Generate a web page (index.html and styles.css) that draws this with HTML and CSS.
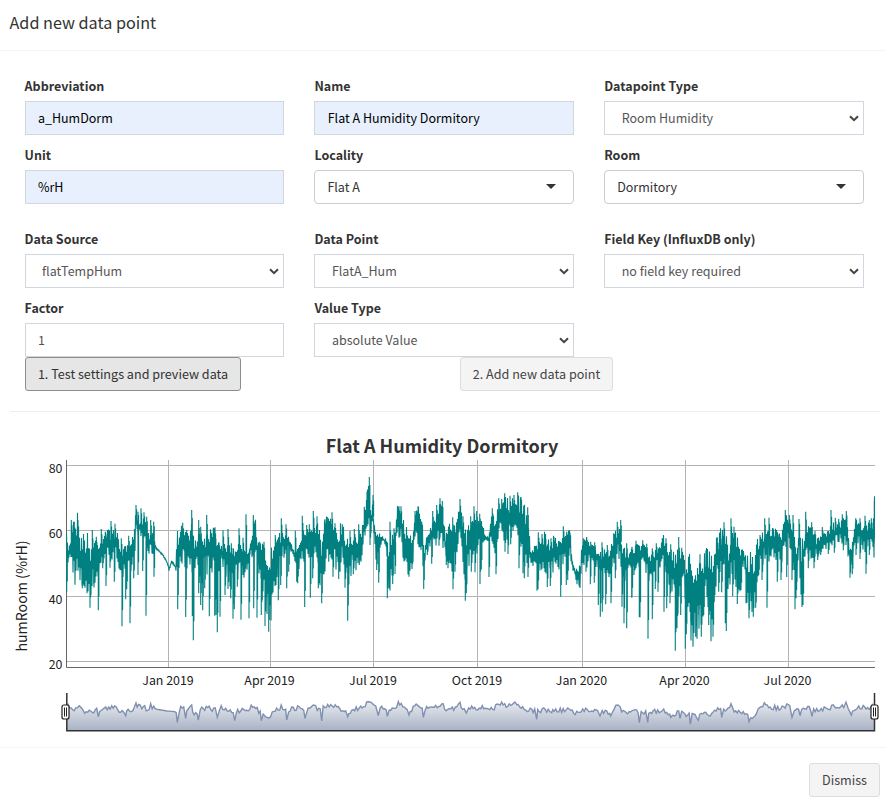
FILE: index.html
```html
<!DOCTYPE html>
<html lang="en">
<head>
<meta charset="utf-8">
<title>Add new data point</title>
<link rel="stylesheet" href="styles.css">
</head>
<body>
<div class="modal">
  <header class="modal-header"><h4>Add new data point</h4></header>
  <main class="modal-body">
    <form class="fields">
      <label class="field"><span>Abbreviation</span><input class="control filled" value="a_HumDorm"></label>
      <label class="field"><span>Name</span><input class="control filled" value="Flat A Humidity Dormitory"></label>
      <label class="field"><span>Datapoint Type</span><div class="control select">Room Humidity<svg class="chevron" viewBox="0 0 10 7"><path d="M1 1.2 5 5.2 9 1.2"/></svg></div></label>
      <label class="field"><span>Unit</span><input class="control filled" value="%rH"></label>
      <label class="field"><span>Locality</span><div class="control picker">Flat A<i class="caret"></i></div></label>
      <label class="field"><span>Room</span><div class="control picker">Dormitory<i class="caret"></i></div></label>
    </form>
    <form class="fields source">
      <label class="field"><span>Data Source</span><div class="control select">flatTempHum<svg class="chevron" viewBox="0 0 10 7"><path d="M1 1.2 5 5.2 9 1.2"/></svg></div></label>
      <label class="field"><span>Data Point</span><div class="control select">FlatA_Hum<svg class="chevron" viewBox="0 0 10 7"><path d="M1 1.2 5 5.2 9 1.2"/></svg></div></label>
      <label class="field"><span>Field Key (InfluxDB only)</span><div class="control select">no field key required<svg class="chevron" viewBox="0 0 10 7"><path d="M1 1.2 5 5.2 9 1.2"/></svg></div></label>
      <label class="field"><span>Factor</span><input class="control" value="1"></label>
      <label class="field"><span>Value Type</span><div class="control select">absolute Value<svg class="chevron" viewBox="0 0 10 7"><path d="M1 1.2 5 5.2 9 1.2"/></svg></div></label>
    </form>
    <div class="actions">
      <div><button class="btn active test">1. Test settings and preview data</button></div>
      <div><button class="btn add">2. Add new data point</button></div>
    </div>
    <hr>
    <svg class="chart" width="886" height="315" viewBox="0 425 886 315">
      <defs>
        <linearGradient id="fade" x1="0" y1="700" x2="0" y2="731" gradientUnits="userSpaceOnUse">
          <stop offset="0" stop-color="#eceef2"/><stop offset="1" stop-color="#a7b1c4"/>
        </linearGradient>
        <clipPath id="plot"><rect x="66" y="460" width="809" height="207"/></clipPath>
      </defs>
      <text class="title" x="442" y="453" text-anchor="middle">Flat A Humidity Dormitory</text>
      <path class="grid" d="M67 465.5H875M67 530.5H875M67 596.5H875M67 661.5H875M168.5 460V667M270.5 460V667M373.5 460V667M477.5 460V667M582.5 460V667M685.5 460V667M788.5 460V667"/>
      <path class="axis" d="M66.5 460V667.5H875"/>
      <g clip-path="url(#plot)"><path id="series"/></g>
      <g class="tick" text-anchor="end">
        <text x="62.5" y="473">80</text><text x="62.5" y="538">60</text><text x="62.5" y="604">40</text><text x="62.5" y="669">20</text>
      </g>
      <g class="tick" text-anchor="middle">
        <text x="168" y="685">Jan 2019</text><text x="269.5" y="685">Apr 2019</text><text x="373" y="685">Jul 2019</text><text x="477" y="685">Oct 2019</text><text x="581.5" y="685">Jan 2020</text><text x="684.5" y="685">Apr 2020</text><text x="787.5" y="685">Jul 2020</text>
      </g>
      <text class="ytitle" transform="translate(27 596) rotate(-90)" text-anchor="middle">humRoom (%rH)</text>
      <path id="range-fill"/><path id="range-line"/>
      <path class="range-axis" d="M66.8 693V730.8H874.5V693"/>
      <g class="handle"><rect x="62" y="705" width="7" height="14" rx="2"/><path d="M64.5 707.5V716.5M66.5 707.5V716.5"/></g>
      <g class="handle"><rect x="871" y="705" width="7" height="14" rx="2"/><path d="M873.5 707.5V716.5M875.5 707.5V716.5"/></g>
    </svg>
  </main>
  <footer class="modal-footer"><button class="btn dismiss">Dismiss</button></footer>
</div>
<script src="chart.js"></script>
</body>
</html>
```
FILE: chart.js
```js
// Each block covers one stretch of the time axis, in thirds of a pixel.
// band: x, top, bottom of the daily range; spikes: x, extreme value.
const blocks = [
  { x0: 0,
    band: '200 258 320,205 285 308,211 270 300,214 215 300,222 215 325,236 210 335,240 262 370,250 265 360,262 270 375,272 300 378,285 270 355,300 265 325,315 240 285,330 240 290,350 240 290,358 280 320,366 290 350,378 290 330,395 280 330,402 240 300,408 180 220,420 200 235,435 200 240,445 245 285,460 230 275,467 275 280,480 288 292,490 300 304,500 318 322,508 335 345,515 318 322,522 325 330,528 340 345,531 250 340,545 235 300,560 250 310,575 230 290,580 270 390,590 260 310,600 240 350,615 260 330,630 240 310,645 250 325,655 270 330,660 275 320',
    spikes: '200 410,247 400,261 415,270 458,281 388,295 466,308 340,318 393,330 338,343 380,366 514,377 433,380 403,390 505,401 370,414 360,428 348,438 482,462 365,533 463,557 486,580 556,577 483,596 415,602 450,608 466,604 415,614 400,628 484,644 482,652 532,214 195,223 200,234 195,277 225,289 245,304 222,316 230,333 198,345 206,364 250,386 242,408 150,414 170,423 160,432 172,440 185,452 195,461 200,548 203,575 165,560 225,596 195,602 215,620 180,632 228,640 218,646 238' },
  { x0: 210,
    band: '30 275 300,45 285 330,60 290 360,75 290 340,90 280 320,100 280 340,115 290 320,125 245 290,137 210 260,143 270 310,155 290 360,165 300 380,172 330 460,185 320 440,192 280 360,205 270 340,215 240 290,230 240 275,240 260 278,250 285 300,258 290 340,268 260 315,280 240 290,300 235 295,315 215 270,327 240 340,335 290 360,345 210 300,355 210 270,370 215 290,385 240 320,397 220 290,410 270 370,425 260 320,440 250 310,455 250 300,462 190 240,472 130 190,477 90 190,482 180 240,488 150 200,493 210 245,498 260 300,507 240 270,520 250 255,530 255 270,534 290 390,545 260 330,555 230 290,562 170 230,572 180 235,582 220 290,595 250 320,605 270 325,613 190 250,625 170 230,635 210 260,642 320 370,648 262 278,658 230 265',
    spikes: '5 235,12 220,15 217,27 262,39 226,54 222,64 265,87 220,99 248,108 178,130 180,134 205,149 260,162 260,196 240,214 190,228 208,256 227,277 182,290 210,298 208,310 168,321 184,345 193,352 186,366 172,375 205,397 208,420 228,433 222,446 208,463 155,471 110,478 66,489 120,540 200,552 220,567 154,573 154,615 168,624 154,632 198,18 480,22 532,30 485,45 420,54 402,62 430,69 491,73 463,82 395,93 494,105 352,117 490,131 460,141 488,154 480,157 435,165 513,176 530,205 436,212 390,230 400,236 350,260 380,263 385,284 456,301 428,308 370,325 400,335 445,345 328,356 320,369 365,386 372,405 398,413 497,415 415,430 358,448 330,480 270,500 345,506 383,532 430,538 400,548 387,555 357,580 310,597 365,606 340,641 400,652 300' },
  { x0: 420,
    band: '0 210 270,7 220 290,11 270 330,18 250 275,26 240 280,36 220 270,46 190 250,56 170 230,66 175 230,72 200 260,78 260 320,88 230 300,98 240 310,108 230 290,115 180 230,125 190 250,132 240 330,140 270 350,148 220 290,160 210 270,175 215 270,185 210 250,195 240 255,205 250 256,215 190 250,228 230 290,234 165 220,244 155 210,254 150 220,266 160 230,280 150 210,293 140 200,302 160 240,312 180 270,322 200 290,332 290 310,345 280 320,360 270 320,375 250 320,390 280 320,400 260 320,415 275 320,428 240 310,440 240 290,450 240 290,456 310 330,465 350 358,475 350 390,482 345 390,486 270 310,500 260 310,515 280 310,530 290 320,540 300 350,555 300 350,565 310 350,575 280 320,585 250 300,600 210 280,606 270 340,615 300 370,625 300 330,640 290 325,655 270 325',
    spikes: '5 200,38 168,50 150,60 130,67 138,98 187,120 132,129 184,152 184,162 154,170 168,179 176,217 160,236 130,245 132,254 115,270 122,282 120,293 112,303 126,311 152,323 157,355 232,366 237,376 240,393 250,402 246,417 258,430 214,440 230,450 233,490 250,500 246,512 260,524 262,546 262,562 270,581 235,592 200,602 195,620 265,636 275,648 257,655 270,11 402,35 326,57 272,79 330,84 340,99 403,105 350,136 437,139 415,154 350,165 352,180 387,184 343,207 366,228 358,255 290,264 297,272 268,297 340,309 355,313 370,324 366,351 407,354 403,372 340,382 396,391 393,422 425,439 390,443 375,478 395,498 350,511 388,523 383,535 450,541 485,547 470,557 448,573 445,586 370,606 455,612 505,620 520,636 427,648 340,658 487' },
  { x0: 630,
    band: '30 290 320,45 270 315,55 310 355,70 300 340,85 285 320,100 260 320,112 290 350,122 290 370,135 330 400,145 320 430,155 300 350,163 300 350,168 350 470,180 345 495,192 350 500,205 345 480,217 340 460,230 300 380,240 350 500,250 350 450,256 290 370,270 250 330,283 240 310,295 300 380,305 240 310,318 270 360,330 290 380,335 290 320,347 300 330,350 340 440,362 330 450,377 320 440,383 270 330,395 250 310,405 240 290,420 240 290,435 235 285,447 240 290,455 270 310,461 200 250,475 195 250,485 230 270,493 270 350,500 310 370,507 220 280,514 300 400,522 250 330,530 220 270,545 230 285,560 260 290,575 250 280,590 240 265,603 220 270,620 215 250,635 210 250,650 200 245,655 250 290,660 290 330,668 270 300,675 200 250,690 215 260,705 220 270,715 215 260,728 220 260,733 150 265',
    spikes: '18 258,38 256,50 266,67 280,79 265,97 250,108 250,122 268,146 246,155 278,180 345,210 298,228 286,262 247,271 240,282 202,303 190,312 215,365 328,390 240,404 190,417 188,429 220,447 238,466 165,478 180,489 180,507 192,527 170,545 202,555 228,577 216,603 165,616 188,626 192,637 178,649 168,677 190,690 190,705 182,718 195,724 190,733 138,5 428,12 360,30 487,54 551,67 493,76 402,84 410,102 470,110 460,120 445,136 587,141 520,152 480,166 581,169 538,182 500,197 545,206 480,214 545,221 480,236 510,249 545,253 440,266 410,275 412,286 505,289 528,308 424,322 447,333 405,348 445,357 490,370 485,377 458,386 360,396 375,411 458,442 380,453 375,470 366,486 375,495 463,498 430,516 456,519 450,535 340,552 340,563 315,572 300,595 297,613 293,640 286,660 368,667 358,678 300,690 312,708 356,718 300,733 265' }
];
const parse = s => s.split(',').map(t => t.split(' ').map(Number));
let seed = 7;
const rand = () => (seed = (seed * 16807) % 2147483647) / 2147483647;

const band = [], spikes = [];
for (const b of blocks) {
  for (const [x, t, l] of parse(b.band)) band.push([b.x0 + x / 3, 455 + t / 3, 455 + l / 3]);
  for (const [x, y] of parse(b.spikes)) spikes.push([b.x0 + x / 3, 455 + y / 3]);
}
band.sort((a, b) => a[0] - b[0]);
const pts = [];
let i = 0, up = false;
for (let x = 66.5; x < 875; x += 0.5) {
  while (i < band.length - 2 && band[i + 1][0] < x) i++;
  const a = band[i], b = band[i + 1];
  const k = Math.max(0, Math.min(1, (x - a[0]) / (b[0] - a[0] || 1)));
  const t = a[1] + (b[1] - a[1]) * k, l = a[2] + (b[2] - a[2]) * k, h = l - t;
  up = !up;
  pts.push([x, up ? t + h * (rand() * 0.7 - 0.4) : l - h * (rand() * 0.95 - 0.6), (t + l) / 2]);
}
let d = 'M' + pts.map(p => p[0].toFixed(1) + ' ' + p[1].toFixed(1)).join('L');
for (const [x, y] of spikes) {
  const n = pts.reduce((m, p) => Math.abs(p[0] - x) < Math.abs(m[0] - x) ? p : m);
  const near = n[2] + (y - n[2]) * 0.75;
  d += `M${x.toFixed(1)} ${n[2].toFixed(1)}V${y.toFixed(1)}M${(x + 0.6).toFixed(1)} ${n[2].toFixed(1)}V${near.toFixed(1)}`;
}
document.getElementById('series').setAttribute('d', d);

// Overview line of the range selector.
const overview = [
  { x0: 0, p: '200 752,214 757,225 765,238 750,250 772,262 765,280 767,295 765,310 763,330 757,350 760,355 768,375 765,395 765,402 757,408 748,420 757,430 752,440 762,452 755,467 762,500 768,528 770,534 780,540 758,548 752,560 765,575 755,580 778,600 765,620 757,640 765,655 765', s: '238 752,295 785,377 782,408 744,452 746,532 802,557 790,575 750,595 795,652 787' },
  { x0: 210, p: '30 757,40 764,55 768,75 772,90 765,110 762,130 755,145 768,155 778,170 780,185 780,192 765,215 757,230 765,250 762,270 757,290 768,310 752,325 762,345 757,365 750,380 758,400 765,415 772,430 765,450 757,475 745,490 750,500 765,530 758,545 765,562 748,580 755,600 770,620 752,640 765,655 755', s: '74 797,154 797,176 790,230 795,285 790,310 750,335 798,413 785,477 740,505 782,532 784,565 740,597 780,640 787' },
  { x0: 420, p: '20 762,40 757,65 748,80 765,100 760,120 750,140 768,155 753,175 760,205 758,222 763,235 745,255 750,285 743,305 757,325 765,350 768,375 765,400 767,425 766,450 763,460 775,475 777,495 762,520 765,540 770,560 773,575 770,595 750,605 768,625 772,645 767', s: '120 742,139 774,285 741,350 793,395 773,540 783,572 783,594 750,658 803' },
  { x0: 630, p: '40 773,45 767,70 770,90 767,110 770,130 780,150 770,170 780,185 780,205 787,220 778,250 775,265 763,280 770,305 757,320 772,345 772,357 790,375 778,385 765,405 755,430 757,450 762,470 753,490 765,510 768,530 757,550 765,575 765,600 757,630 757,650 750,662 775,675 758,690 757,710 757,733 755', s: '53 802,122 787,150 790,181 808,205 796,275 787,303 746,357 800,403 743,486 787,510 782,546 784,648 742,664 780' }
];
const line = [];
const trend = [], dips = [];
for (const o of overview) {
  for (const q of parse(o.p)) trend.push([o.x0 * 3 + q[0], q[1]]);
  for (const q of parse(o.s)) dips.push([o.x0 * 3 + q[0], q[1]]);
}
let j = 0;
for (let x = 200; x <= 2623; x += 4.5) {
  while (j < trend.length - 2 && trend[j + 1][0] < x) j++;
  const a = trend[j], b = trend[j + 1];
  const y = a[1] + (b[1] - a[1]) * Math.min(1, (x - a[0]) / (b[0] - a[0]));
  const calm = x > 466 && x < 528;
  if (!dips.some(q => Math.abs(q[0] - x) < 3)) line.push([x / 3, 455 + (y + (calm ? 0 : (rand() - 0.5) * 15)) / 3]);
}
for (const q of dips) line.push([q[0] / 3, 455 + q[1] / 3]);
line.sort((a, b) => a[0] - b[0]);
const path = 'M' + line.map(p => p[0].toFixed(1) + ' ' + p[1].toFixed(1)).join('L');
document.getElementById('range-line').setAttribute('d', path);
document.getElementById('range-fill').setAttribute('d', path + 'L874.5 731L66.5 731Z');
```
FILE: styles.css
```css
* { box-sizing: border-box; }
body {
  margin: 0;
  background: #fff;
  color: #333;
  font: 12.5px/20px "Noto Sans CJK SC", sans-serif;
}
.modal { display: flex; flex-direction: column; width: 886px; height: 800px; overflow: hidden; }
.modal-header { height: 51px; padding: 9px 9.5px 0; border-bottom: 1px solid #f4f4f4; }
h4 { margin: 0; font-size: 16.2px; line-height: 26px; font-weight: 400; }
.modal-body { height: 696px; padding-top: 25px; }
.fields { display: grid; grid-template-columns: repeat(3, 1fr); gap: 10px 30.1px; padding: 0 22.1px 0 24.6px; }
.source { margin-top: 25px; }
.field { display: flex; flex-direction: column; gap: 5px; font-weight: 700; }
.control {
  display: flex; align-items: center; justify-content: space-between;
  width: 100%; height: 34px; padding: 0 12px;
  border: 1px solid #d2d6de; border-radius: 0; background: #fff;
  color: #555; font: inherit; font-weight: 400;
}
input.control { padding-bottom: 2px; padding-left: 12.3px; }
.filled { background: #e8f0fe; color: #000; }
.select { padding: 0 4px 0 16.5px; }
.chevron { width: 10px; height: 7px; fill: none; stroke: #444; stroke-width: 2; }
.picker { padding-right: 17px; border-color: #ccc; border-radius: 4px; color: #333; }
.caret { border: 5px solid transparent; border-top-color: #333; border-bottom: 0; margin-top: -2px; }
.actions { display: grid; grid-template-columns: 435px 1fr; padding-left: 25px; }
.btn {
  height: 34px; padding: 0; border: 1px solid #ddd; border-radius: 3px;
  background: #f4f4f4; color: #444; font: inherit; font-size: 12.6px; display: block;
}
.active { background: #e6e6e6; border-color: #8c8c8c; color: #333; }
.test { width: 216px; }
.add { width: 153px; }
.dismiss { width: 71px; }
hr { height: 1px; margin: 20px 6px 0 10px; border: 0; background: #eee; }
.chart { display: block; margin-top: 13px; }
.chart text { fill: #222; }
.chart .title { font-size: 18px; font-weight: 700; fill: #333; }
.tick { font-size: 12.4px; }
.ytitle { font-size: 14.2px; }
.grid { stroke: #b3b3b3; fill: none; }
.axis { stroke: #666; fill: none; }
#series { fill: none; stroke: #008080; stroke-width: 1.1; stroke-linejoin: bevel; }
#range-line { fill: none; stroke: #8090b0; stroke-width: 1.4; }
#range-fill { fill: url(#fade); }
.range-axis { fill: none; stroke: #333; stroke-width: 1.5; }
.handle { fill: #fff; stroke: #222; stroke-width: 1.2; }
.handle path { stroke-width: 1; }
.modal-footer { display: flex; justify-content: flex-end; height: 53px; padding: 15px 6px 0 0; border-top: 1px solid #f4f4f4; }
```
